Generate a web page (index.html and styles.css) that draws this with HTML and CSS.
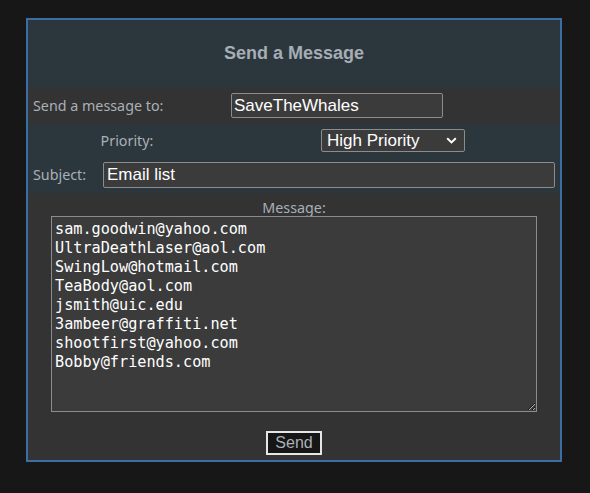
FILE: index.html
```html
<!DOCTYPE html>
<html>
<head>
<meta charset="utf-8">
<title>Send a Message</title>
<link rel="stylesheet" href="styles.css">
</head>
<body>
<form class="panel">
  <div class="header">Send a Message</div>
  <div class="grid-row row-to">
    <label class="label label-left">Send a message to:</label>
    <div class="cell-left"><input class="field field-to" type="text" value="SaveTheWhales"></div>
  </div>
  <div class="grid-row row-priority">
    <label class="label label-center">Priority:</label>
    <div class="cell-center">
      <span class="select-wrap">
        <select class="field field-select">
          <option>High Priority</option>
          <option>Normal</option>
          <option>Low Priority</option>
        </select>
        <svg class="chevron" width="11" height="7" viewBox="0 0 11 7"><path d="M1.2 1.2 L5.5 5.4 L9.8 1.2" fill="none" stroke="#ffffff" stroke-width="2"/></svg>
      </span>
    </div>
  </div>
  <div class="row-subject">
    <label class="label label-subject">Subject:</label>
    <input class="field field-subject" type="text" value="Email list">
  </div>
  <div class="message-area">
    <label class="label label-message">Message:</label>
    <textarea class="field field-message">sam.goodwin@yahoo.com
UltraDeathLaser@aol.com
SwingLow@hotmail.com
TeaBody@aol.com
jsmith@uic.edu
3ambeer@graffiti.net
shootfirst@yahoo.com
Bobby@friends.com</textarea>
    <button class="send" type="button">Send</button>
  </div>
</form>
</body>
</html>
```

FILE: styles.css
```css
html, body {
  margin: 0;
  padding: 0;
  background: #171717;
}

body {
  padding: 18px 0 0 26px;
}

.panel {
  box-sizing: border-box;
  width: 536px;
  height: 444px;
  border: 2px solid #3a6ea5;
  background: #2c363d;
  display: flex;
  flex-direction: column;
  margin: 0;
}

.header {
  height: 67px;
  display: flex;
  align-items: center;
  justify-content: center;
  font-family: "Liberation Sans", Arial, sans-serif;
  font-weight: bold;
  font-size: 18px;
  color: #a6adb4;
}

.label {
  font-family: "Noto Sans", "Open Sans", sans-serif;
  font-size: 14.3px;
  color: #a9b0b6;
}

.grid-row {
  display: grid;
  grid-template-columns: 198px 1fr;
  align-items: center;
}

.row-to {
  height: 37px;
  background: #333333;
}

.row-priority {
  height: 32px;
}

.label-left {
  padding-left: 5px;
}

.cell-left {
  padding-left: 5px;
  display: flex;
}

.label-center,
.cell-center {
  text-align: center;
}

.cell-center {
  display: flex;
  justify-content: center;
}

.field {
  box-sizing: border-box;
  background: #3b3b3b;
  border: 1px solid #8c8c8c;
  border-radius: 2px;
  color: #ffffff;
  font-family: "Liberation Sans", Arial, sans-serif;
  font-size: 17px;
  margin: 0;
  outline: none;
}

.field-to {
  width: 212px;
  height: 25px;
  padding: 0 2px;
}

.select-wrap {
  position: relative;
  display: inline-block;
}

.field-select {
  appearance: none;
  -webkit-appearance: none;
  width: 144px;
  height: 23px;
  padding: 0 0 0 5px;
  display: block;
}

.chevron {
  position: absolute;
  right: 8px;
  top: 8px;
  pointer-events: none;
}

.row-subject {
  height: 37px;
  display: flex;
  align-items: center;
}

.label-subject {
  box-sizing: border-box;
  width: 75px;
  padding-left: 5px;
}

.field-subject {
  flex: 1;
  height: 26px;
  margin-right: 5px;
  padding: 0 3px;
}

.message-area {
  flex: 1;
  background: #333333;
  display: flex;
  flex-direction: column;
  align-items: center;
  padding-top: 6px;
}

.label-message {
  height: 17px;
  line-height: 17px;
}

.field-message {
  width: 486px;
  height: 196px;
  padding: 3px 3px 2px;
  font-family: "DejaVu Sans Mono", "Liberation Mono", monospace;
  font-size: 15.2px;
  line-height: 19px;
  resize: both;
  border-radius: 0;
}

.send {
  margin-top: 19px;
  box-sizing: border-box;
  width: 56px;
  height: 24px;
  background: #161616;
  border: 2px solid #e6e6e6;
  color: #a9b0b6;
  font-family: "Liberation Sans", Arial, sans-serif;
  font-size: 16px;
  padding: 0;
}
```
